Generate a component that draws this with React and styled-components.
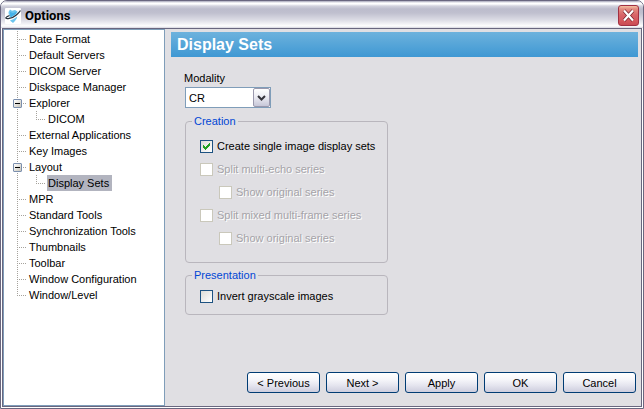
import React, { useState } from "react";
import styled, { createGlobalStyle, css } from "styled-components";

const GlobalStyle = createGlobalStyle`
  *, *::before, *::after { box-sizing: border-box; }
  body { margin: 0; background: #fff; }
  body, button, select, input {
    font-family: "Liberation Sans", Arial, sans-serif;
    font-size: 11px;
    line-height: 16px;
    color: #000;
  }
`;

const dotsDown = "repeating-linear-gradient(to bottom, #a5a29c 0 1px, transparent 1px 2px)";
const dotsAcross = "repeating-linear-gradient(to right, #a5a29c 0 1px, transparent 1px 2px)";

const Window = styled.div`
  display: flex;
  flex-direction: column;
  min-height: 100vh;
  border: 1px solid #69667f;
  border-radius: 7px 7px 0 0;
  padding: 0 1px 1px;
  background: #fff;
  overflow: hidden;
`;

const TitleBar = styled.header`
  display: flex;
  align-items: center;
  gap: 4px;
  height: 27px;
  margin: 0 -1px;
  padding: 2px 4px 0;
  background: linear-gradient(
    to bottom,
    #a5a4b8 0, #fff 2px, #fff 3px, #d2d2dd 5px, #bcbccc 8px,
    #c0c0cf 12px, #dcdce5 19px, #f8f8fa 24px, #fff 25px, #d5d5df 27px
  );
`;

const Title = styled.h1`
  flex: 1;
  margin: 0;
  font: bold 13px/20px Roboto, sans-serif;
`;

const CloseButton = styled.button`
  display: grid;
  place-items: center;
  width: 21px;
  height: 21px;
  padding: 0;
  border: 1px solid #a13042;
  border-radius: 3px;
  background: linear-gradient(#f3c0a0 0, #e38b80 3px, #d86468 9px, #d4565b 15px, #c94b55);
`;

const Body = styled.div`
  flex: 1;
  display: grid;
  grid-template-columns: 162px 1fr;
  border: 1px solid #69667f;
  background: #e0dfe3;
`;

const Sidebar = styled.nav`
  padding: 1px 0 0 9px;
  border: 1px solid #7f9db9;
  background: #fff;
`;

const Tree = styled.ul`
  margin: 0;
  padding: 0;
  list-style: none;
`;

const Node = styled.li`
  position: relative;
  padding-left: 15px;

  &::before {
    content: "";
    position: absolute;
    left: 4px;
    top: 0;
    width: 1px;
    height: ${(p) => (p.$last ? "9px" : "100%")};
    background: ${dotsDown};
  }

  &::after {
    content: "";
    position: absolute;
    left: 4px;
    top: 8px;
    width: 9px;
    height: 1px;
    background: ${dotsAcross};
  }
`;

const NodeLabel = styled.button`
  display: block;
  height: 16px;
  padding: 0 3px 0 1px;
  border: 0;
  background: ${(p) => (p.$selected ? "#b2b4bf" : "transparent")};
  white-space: nowrap;
`;

const Expander = styled.button`
  position: absolute;
  z-index: 1;
  left: 0;
  top: 4px;
  width: 9px;
  height: 9px;
  padding: 0;
  border: 1px solid #7b8fae;
  border-radius: 1px;
  background:
    linear-gradient(#000, #000) center / 5px 1px no-repeat,
    linear-gradient(135deg, #fff, #c8c5ba);
`;

const SubTree = styled(Tree)`
  padding-left: 4px;
`;

const Page = styled.main`
  display: flex;
  flex-direction: column;
  min-width: 0;
  padding: 3px 3px 13px 5px;
`;

const Banner = styled.h2`
  margin: 0 0 0 1px;
  padding: 0 6px;
  background: linear-gradient(#6db2dd, #3f98d3);
  color: #fff;
  font-size: 16px;
  line-height: 25px;
`;

const Settings = styled.div`
  flex: 1;
  display: flex;
  flex-direction: column;
  width: 218px;
  padding: 13px 0 0 15px;
`;

const FieldLabel = styled.label`
  margin-left: -1px;
`;

const SelectBox = styled.div`
  position: relative;
  width: 86px;
  height: 21px;
  margin: 1px 0 7px;
`;

const Select = styled.select`
  appearance: none;
  width: 100%;
  height: 100%;
  padding: 0 20px 0 3px;
  border: 1px solid #7f9db9;
  border-radius: 0;
  background: #fff;
`;

const SelectArrow = styled.span`
  position: absolute;
  top: 1px;
  right: 1px;
  display: grid;
  place-items: center;
  width: 17px;
  height: 19px;
  border: 1px solid #9a98ad;
  border-radius: 2px;
  background: linear-gradient(#fff, #ececf3 45%, #c7c7d8);
  pointer-events: none;
`;

const Group = styled.fieldset`
  display: flex;
  flex-direction: column;
  gap: 7px;
  min-width: 0;
  margin: 0 0 6px;
  padding: ${(p) => (p.$tall ? "11px 14px 16px" : "7px 14px 10px")};
  border: 1px solid #b9b6bd;
  border-radius: 4px;
`;

const Legend = styled.legend`
  margin-left: -8px;
  padding: 0 2px;
  color: #0046d5;
  line-height: 12px;
`;

const CheckLabel = styled.label`
  position: relative;
  display: flex;
  align-items: center;
  gap: 4px;
  margin-left: ${(p) => (p.$nested ? "19px" : "0")};
  white-space: nowrap;
  ${(p) => p.$disabled && css`
    color: #a5a3a8;
    text-shadow: 1px 1px 0 #fff;
  `}
`;

const CheckInput = styled.input`
  appearance: none;
  flex: none;
  width: 13px;
  height: 13px;
  margin: 0;
  border: 1px solid #1d5281;
  background: linear-gradient(135deg, #dcdcd7, #fff);

  &:disabled {
    border-color: #cac8bb;
    background: #fff;
  }
`;

const Tick = styled.svg`
  position: absolute;
  left: 3px;
  width: 7px;
  height: 7px;
  pointer-events: none;
`;

const Row = styled.div`
  display: flex;
  height: 16px;
`;

const Actions = styled.footer`
  display: flex;
  justify-content: flex-end;
  gap: 6px;
  padding-right: 2px;
`;

const ActionButton = styled.button`
  width: 73px;
  height: 21px;
  padding: 0;
  border: 1px solid #003c74;
  border-radius: 3px;
  background: linear-gradient(#fff, #f6f6fa 35%, #e5e5ef 65%, #cdcddd);
  text-align: center;
  white-space: nowrap;
`;

const treeData = [
  { name: "Date Format" },
  { name: "Default Servers" },
  { name: "DICOM Server" },
  { name: "Diskspace Manager" },
  { name: "Explorer", children: [{ name: "DICOM" }] },
  { name: "External Applications" },
  { name: "Key Images" },
  { name: "Layout", children: [{ name: "Display Sets" }] },
  { name: "MPR" },
  { name: "Standard Tools" },
  { name: "Synchronization Tools" },
  { name: "Thumbnails" },
  { name: "Toolbar" },
  { name: "Window Configuration" },
  { name: "Window/Level" },
];

function AppIcon() {
  return (
    <svg width="16" height="16" viewBox="0 0 16 16" aria-hidden="true">
      <rect width="16" height="16" rx="1" fill="#fff" />
      <path d="M3.500 4L5 1.500l2 1.200L10 2l2.500 1.500L12 10l-2 3-2 2-2.500-2L4 10z" fill="#6cc5ee" />
      <path d="M5 4l3 1 3-1 0 4-3 2-3-2z" fill="#45b2e8" />
      <path d="M4.500 7.500C1 9 0 10.500 1.500 11c3 .6 7-1 9.500-3.200S15 4 15.500 2.500" fill="none" stroke="#fff" strokeWidth="2.600" />
      <path d="M4.500 7.500C1 9 0 10 1.500 10.400c3 .6 7-1 9.500-3.200S15 4 15.500 2.500" fill="none" stroke="#25313d" strokeWidth="1.200" />
    </svg>
  );
}

function TreeNode({ node, last, selected, onSelect }) {
  const [open, setOpen] = useState(true);
  return (
    <Node $last={last}>
      {node.children && (
        <Expander
          type="button"
          aria-label={`Toggle ${node.name}`}
          aria-expanded={open}
          onClick={() => setOpen(!open)}
        />
      )}
      <NodeLabel
        type="button"
        $selected={selected === node.name}
        onClick={() => onSelect(node.name)}
      >
        {node.name}
      </NodeLabel>
      {node.children && open && (
        <SubTree>
          {node.children.map((child, i) => (
            <TreeNode
              key={child.name}
              node={child}
              last={i === node.children.length - 1}
              selected={selected}
              onSelect={onSelect}
            />
          ))}
        </SubTree>
      )}
    </Node>
  );
}

function Check({ label, defaultChecked = false, disabled = false, nested = false }) {
  const [checked, setChecked] = useState(defaultChecked);
  return (
    <Row>
      <CheckLabel $disabled={disabled} $nested={nested}>
        <CheckInput
          type="checkbox"
          checked={checked}
          disabled={disabled}
          onChange={(e) => setChecked(e.target.checked)}
        />
        {checked && (
          <Tick viewBox="0 0 7 7" shapeRendering="crispEdges" aria-hidden="true">
            <path
              d="M0 2h1v1h1v1h1v-1h1v-1h1v-1h1v-1h1v3h-1v1h-1v1h-1v1h-1v1h-1v-1h-1v-1h-1z"
              fill="#21a121"
            />
          </Tick>
        )}
        {label}
      </CheckLabel>
    </Row>
  );
}

export default function App() {
  const [selected, setSelected] = useState("Display Sets");
  return (
    <>
      <GlobalStyle />
      <Window>
        <TitleBar>
          <AppIcon />
          <Title>Options</Title>
          <CloseButton type="button" aria-label="Close">
            <svg width="13" height="13" viewBox="0 0 13 13" aria-hidden="true">
              <path d="M2 1.500L11 11.500M11 1.500L2 11.500" stroke="#7b2730" strokeWidth="3.600" />
              <path d="M2 1.500L11 11.500M11 1.500L2 11.500" stroke="#fff" strokeWidth="2.200" />
            </svg>
          </CloseButton>
        </TitleBar>
        <Body>
          <Sidebar aria-label="Option pages">
            <Tree>
              {treeData.map((node, i) => (
                <TreeNode
                  key={node.name}
                  node={node}
                  last={i === treeData.length - 1}
                  selected={selected}
                  onSelect={setSelected}
                />
              ))}
            </Tree>
          </Sidebar>
          <Page>
            <Banner>Display Sets</Banner>
            <Settings>
              <FieldLabel htmlFor="modality">Modality</FieldLabel>
              <SelectBox>
                <Select id="modality" defaultValue="CR">
                  <option>CR</option>
                </Select>
                <SelectArrow aria-hidden="true">
                  <svg width="9" height="6" viewBox="0 0 9 6">
                    <path d="M1 1l3.500 3.500L8 1" fill="none" stroke="#35343c" strokeWidth="2" />
                  </svg>
                </SelectArrow>
              </SelectBox>
              <Group $tall>
                <Legend>Creation</Legend>
                <Check label="Create single image display sets" defaultChecked />
                <Check label="Split multi-echo series" disabled />
                <Check label="Show original series" disabled nested />
                <Check label="Split mixed multi-frame series" disabled />
                <Check label="Show original series" disabled nested />
              </Group>
              <Group>
                <Legend>Presentation</Legend>
                <Check label="Invert grayscale images" />
              </Group>
            </Settings>
            <Actions>
              <ActionButton type="button">&lt; Previous</ActionButton>
              <ActionButton type="button">Next &gt;</ActionButton>
              <ActionButton type="button">Apply</ActionButton>
              <ActionButton type="button">OK</ActionButton>
              <ActionButton type="button">Cancel</ActionButton>
            </Actions>
          </Page>
        </Body>
      </Window>
    </>
  );
}
